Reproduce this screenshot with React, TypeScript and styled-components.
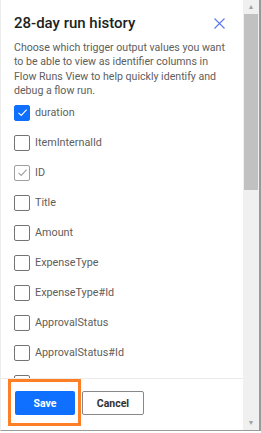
import React from 'react';
import styled, {createGlobalStyle} from "styled-components";

const GlobalStyle = createGlobalStyle`
  html, body {
    margin: 0;
    padding: 0;
    background: #ffffff;
  }
  body {
    font-family: Roboto, 'Liberation Sans', sans-serif;
  }
`

const fields = [
    {name: 'duration', state: 'checked'},
    {name: 'ItemInternalId', state: 'none'},
    {name: 'ID', state: 'disabled'},
    {name: 'Title', state: 'none'},
    {name: 'Amount', state: 'none'},
    {name: 'ExpenseType', state: 'none'},
    {name: 'ExpenseType#Id', state: 'none'},
    {name: 'ApprovalStatus', state: 'none'},
    {name: 'ApprovalStatus#Id', state: 'none'},
    {name: '', state: 'none'},
]

type BoxState = 'checked' | 'none' | 'disabled'

const CheckMark = ({color}: { color: string }) => (
    <svg width="11" height="11" viewBox="0 0 11 11">
        <path d="M1.5 5.8 L4.3 8.4 L9.6 2.6" fill="none" stroke={color} strokeWidth="1.1"/>
    </svg>
)

export default function App() {
    return (
        <>
            <GlobalStyle/>
            <Frame>
                <Panel>
                    <Body>
                        <Header>
                            <Title>28-day run history</Title>
                            <CloseButton>
                                <svg width="11" height="11" viewBox="0 0 11 11">
                                    <path d="M0.5 0.5 L10.5 10.5 M10.5 0.5 L0.5 10.5" stroke="#5a78ee" strokeWidth="1.1"/>
                                </svg>
                            </CloseButton>
                        </Header>
                        <Description>
                            Choose which trigger output values you want to be able to view as identifier columns in
                            Flow Runs View to help quickly identify and debug a flow run.
                        </Description>
                        <CheckList>
                            {fields.map((f, i) => (
                                <CheckRow key={i}>
                                    <Box state={f.state as BoxState}>
                                        {f.state === 'checked' && <CheckMark color="#ffffff"/>}
                                        {f.state === 'disabled' && <CheckMark color="#a19f9d"/>}
                                    </Box>
                                    <Label>{f.name}</Label>
                                </CheckRow>
                            ))}
                        </CheckList>
                    </Body>
                    <Footer>
                        <PrimaryButton>Save</PrimaryButton>
                        <DefaultButton>Cancel</DefaultButton>
                    </Footer>
                </Panel>
                <ScrollBar>
                    <Arrow>▲</Arrow>
                    <Thumb/>
                    <Track/>
                    <Arrow>▼</Arrow>
                </ScrollBar>
            </Frame>
            <Highlight/>
        </>
    );
};

const Frame = styled.div`
  display: flex;
  width: 261px;
  height: 431px;
  box-sizing: border-box;
  border-right: 2px solid #9a9a9a;
  border-bottom: 1px solid #9a9a9a;
  border-left: 1px solid #ececec;
  background: #ffffff;
`

const Panel = styled.div`
  flex: 1;
  display: flex;
  flex-direction: column;
  min-width: 0;
`

const Body = styled.div`
  flex: 1;
  overflow: hidden;
  padding: 0 10px 0 13px;
`

const Header = styled.div`
  display: flex;
  justify-content: space-between;
  align-items: center;
  padding: 12px 8px 0 0;
  margin-bottom: 7px;
`

const Title = styled.div`
  font-weight: 500;
  font-size: 15px;
  line-height: 22px;
  color: #201f1e;
`

const CloseButton = styled.span`
  display: flex;
  margin-top: 1px;
`

const Description = styled.div`
  font-size: 10.6px;
  line-height: 14.4px;
  color: #605e5c;
  margin-bottom: -1px;
`

const CheckList = styled.div`
  display: flex;
  flex-direction: column;
`

const CheckRow = styled.div`
  display: flex;
  align-items: center;
  gap: 5px;
  height: 30px;
  flex-shrink: 0;
`

const Box = styled.div<{ state: BoxState }>`
  width: 16px;
  height: 16px;
  box-sizing: border-box;
  border-radius: 2px;
  display: flex;
  align-items: center;
  justify-content: center;
  border: 1px solid ${p => p.state === 'checked' ? '#0f6fff' : p.state === 'disabled' ? '#a19f9d' : '#767472'};
  background: ${p => p.state === 'checked' ? '#0f6fff' : '#ffffff'};
`

const Label = styled.span`
  font-size: 10.8px;
  line-height: 16px;
  color: #605e5c;
`

const Footer = styled.div`
  display: flex;
  gap: 7px;
  padding: 12px 14px 15px;
  border-top: 1px solid #edebe9;
`

const PrimaryButton = styled.button`
  width: 60px;
  height: 24px;
  border: none;
  border-radius: 2px;
  background: #0f6fff;
  color: #ffffff;
  font-family: Roboto, 'Liberation Sans', sans-serif;
  font-weight: 700;
  font-size: 10.5px;
  padding: 0;
`

const DefaultButton = styled.button`
  width: 62px;
  height: 24px;
  border: 1px solid #8a8886;
  border-radius: 2px;
  background: #ffffff;
  color: #323130;
  font-family: Roboto, 'Liberation Sans', sans-serif;
  font-weight: 700;
  font-size: 10.5px;
  padding: 0;
`

const ScrollBar = styled.div`
  width: 16px;
  display: flex;
  flex-direction: column;
  background: #f0f0f0;
`

const Arrow = styled.div`
  height: 14px;
  font-size: 7px;
  line-height: 14px;
  text-align: center;
  color: #a3a3a3;
`

const Thumb = styled.div`
  height: 176px;
  margin: 0 1px;
  background: #c1c1c1;
`

const Track = styled.div`
  flex: 1;
`

const Highlight = styled.div`
  position: absolute;
  left: 8px;
  top: 379px;
  width: 73px;
  height: 47px;
  box-sizing: border-box;
  border: 3px solid #ff7f27;
`
